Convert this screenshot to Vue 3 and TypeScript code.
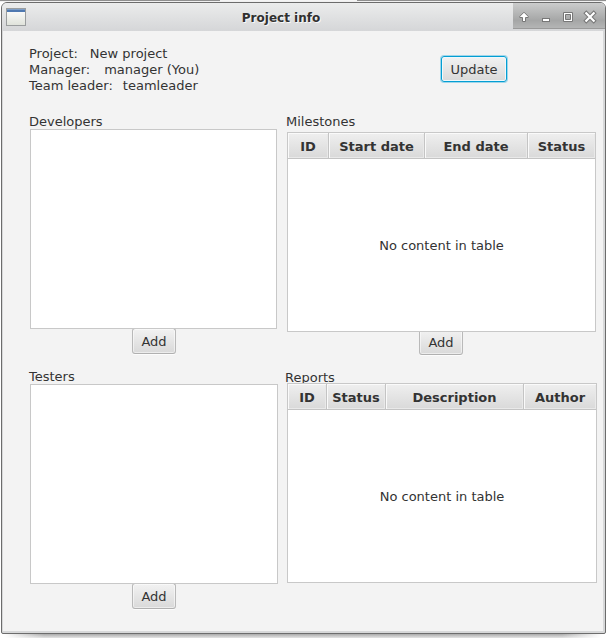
<script setup lang="ts">
interface Column {
  title: string
  width: number
}

interface Detail {
  name: string
  value: string
  gap: number
}

const details: Detail[] = [
  { name: 'Project:', value: 'New project', gap: 12 },
  { name: 'Manager:', value: 'manager (You)', gap: 14 },
  { name: 'Team leader:', value: 'teamleader', gap: 10 },
]

const milestoneColumns: Column[] = [
  { title: 'ID', width: 41 },
  { title: 'Start date', width: 96 },
  { title: 'End date', width: 103 },
  { title: 'Status', width: 67 },
]

const reportColumns: Column[] = [
  { title: 'ID', width: 39 },
  { title: 'Status', width: 59 },
  { title: 'Description', width: 138 },
  { title: 'Author', width: 72 },
]
</script>

<template>
  <div class="desktop">
    <div class="strip"><span class="strip-gap"></span></div>
    <div class="window">
      <header class="titlebar">
        <svg class="app-icon" width="20" height="18" viewBox="0 0 20 18">
          <defs>
            <linearGradient id="iconFill" x1="0" y1="0" x2="0" y2="1">
              <stop offset="0" stop-color="#ffffff" />
              <stop offset="1" stop-color="#dfe2da" />
            </linearGradient>
          </defs>
          <rect x="0.5" y="0.5" width="19" height="17" fill="url(#iconFill)" stroke="#9a9d9e" />
          <rect x="1" y="1" width="18" height="3" fill="#4f79b0" />
          <rect x="1" y="1" width="18" height="1" fill="#7f9fc8" />
        </svg>
        <h1 class="title">Project info</h1>
        <div class="controls">
          <svg width="92" height="26" viewBox="0 0 92 26">
            <path d="M11 9.200L15.200 13.400V14.500H12.500V18.500H9.500V14.500H6.800V13.400Z" fill="#fff" stroke="#777" stroke-width="1" />
            <rect x="29.500" y="15.500" width="7" height="3" fill="#fff" stroke="#777" />
            <path d="M50.500 9.500h9v9h-9zM52.500 11.500v5h5v-5z" fill="#fff" fill-rule="evenodd" stroke="#777" />
            <path d="M73.300 10.300L80.700 17.700M80.700 10.300L73.300 17.700" stroke="#777" stroke-width="4.200" stroke-linecap="square" />
            <path d="M73.300 10.300L80.700 17.700M80.700 10.300L73.300 17.700" stroke="#fff" stroke-width="2.200" stroke-linecap="square" />
          </svg>
        </div>
      </header>

      <main class="content">
        <section class="summary">
          <div class="details">
            <div v-for="d in details" :key="d.name" class="detail" :style="{ gap: d.gap + 'px' }">
              <span>{{ d.name }}</span>
              <span>{{ d.value }}</span>
            </div>
          </div>
          <button class="button focused" type="button">Update</button>
        </section>

        <div class="columns">
          <div class="column left">
            <section class="group developers">
              <div class="label">Developers</div>
              <div class="list"></div>
              <button class="button add" type="button">Add</button>
            </section>
            <section class="group testers">
              <div class="label">Testers</div>
              <div class="list"></div>
              <button class="button add" type="button">Add</button>
            </section>
          </div>

          <div class="column right">
            <section class="group milestones">
              <div class="label">Milestones</div>
              <div class="table">
                <div class="thead">
                  <div v-for="c in milestoneColumns" :key="c.title" class="th" :style="{ width: c.width + 'px' }">{{ c.title }}</div>
                </div>
                <div class="placeholder">No content in table</div>
              </div>
              <button class="button add" type="button">Add</button>
            </section>
            <section class="group reports">
              <div class="label">Reports</div>
              <div class="table">
                <div class="thead">
                  <div v-for="c in reportColumns" :key="c.title" class="th" :style="{ width: c.width + 'px' }">{{ c.title }}</div>
                </div>
                <div class="placeholder">No content in table</div>
              </div>
            </section>
          </div>
        </div>
      </main>
    </div>
    <div class="shadow"></div>
  </div>
</template>

<style>
body {
  background: #fff;
  overflow: hidden;
}
</style>

<style scoped>
.desktop,
.desktop * {
  box-sizing: border-box;
}
.desktop {
  width: 606px;
  height: 638px;
  display: flex;
  flex-direction: column;
  font-family: "DejaVu Sans", sans-serif;
  font-size: 13px;
  color: #333;
}
.strip {
  height: 2px;
  border-top: 1px solid #8f8f8f;
  background: #f0f0f0;
}
.strip-gap {
  display: block;
  width: 137px;
  height: 1px;
  margin: -1px 0 0 220px;
  background: #f4f4f4;
}
.window {
  height: 632px;
  margin-left: 1px;
  border: 1px solid #6c6c6c;
  border-radius: 6px 6px 2px 2px;
  background: #d7d8d9;
  overflow: hidden;
}
.titlebar {
  height: 28px;
  display: flex;
  align-items: flex-start;
  background: linear-gradient(#ebecec, #d5d6d8);
}
.app-icon {
  margin: 5px 0 0 4px;
}
.title {
  flex: 1;
  margin: 0;
  padding: 7px 0 0 23px;
  text-align: center;
  font-size: 12px;
  line-height: 16px;
  font-weight: bold;
  color: #303030;
  text-shadow: 1px 1px 0 #f8f8f8;
}
.controls {
  width: 92px;
  height: 26px;
  background: linear-gradient(#cbcccc, #a5a6a6 70%, #b4b5b5);
  border-bottom: 1px solid #999;
}
.controls svg {
  display: block;
}
.content {
  width: 600px;
  height: 600px;
  margin-left: 1px;
  background: #f3f3f3;
}
.summary {
  height: 82px;
  padding: 15px 0 0 26px;
  display: flex;
  align-items: flex-start;
}
.details {
  width: 412px;
}
.detail {
  display: flex;
  height: 16px;
  line-height: 16px;
  white-space: pre;
}
.columns {
  display: flex;
}
.left {
  width: 257px;
  padding-left: 26px;
  flex: none;
}
.right {
  flex: 1;
  padding-left: 26px;
}
.group {
  display: flex;
  flex-direction: column;
  align-items: flex-start;
}
.label {
  height: 16px;
  line-height: 18px;
}
.testers .label {
  line-height: 16px;
}
.list {
  width: 247px;
  height: 200px;
  margin-left: 1px;
  background: #fff;
  border: 1px solid #c8c8c8;
  z-index: 1;
}
.developers,
.milestones {
  height: 256px;
}
.testers .list {
  width: 248px;
  margin-top: -1px;
}
.table {
  width: 309px;
  height: 200px;
  margin: 3px 0 0 1px;
  display: flex;
  flex-direction: column;
  background: #fff;
  border: 1px solid #c8c8c8;
  z-index: 1;
}
.reports .label {
  margin-left: -1px;
}
.reports .table {
  width: 310px;
  margin-top: -2px;
}
.thead {
  display: flex;
  height: 26px;
  border-bottom: 1px solid #c4c4c4;
  flex: none;
}
.th {
  border-right: 1px solid #c4c4c4;
  background: linear-gradient(#efefef, #d9d9d9);
  box-shadow: inset 1px 1px 0 #fafafa, inset -1px -1px 0 #e9e9e9;
  text-align: center;
  font-weight: bold;
  line-height: 27px;
}
.th:last-child {
  border-right: 0;
}
.placeholder {
  flex: 1;
  display: flex;
  align-items: center;
  justify-content: center;
}
.button {
  flex: none;
  height: 26px;
  padding: 1px 0 0;
  font: inherit;
  line-height: 24px;
  color: #333;
  background: linear-gradient(#f2f2f2, #d9d9d9);
  border: 1px solid #b9b9b9;
  border-bottom-color: #b0b0b0;
  border-radius: 3px;
  box-shadow: inset 0 0 0 1px rgba(255, 255, 255, 0.5), 0 1px 0 #fcfcfc;
}
.add {
  width: 44px;
  margin: -1px 0 0 103px;
}
.milestones .add {
  margin: -3px 0 0 133px;
}
.focused {
  width: 66px;
  margin-top: 10px;
  border-color: #039ed3;
  box-shadow: inset 0 0 0 1px #f0f8fb, 0 0 0 1px #9fd6ea;
}
.shadow {
  height: 4px;
  margin: 0 4px;
  background: linear-gradient(90deg, #fff, transparent 40px, transparent 558px, #fff), linear-gradient(#aaa, #e4e4e4);
}
</style>
